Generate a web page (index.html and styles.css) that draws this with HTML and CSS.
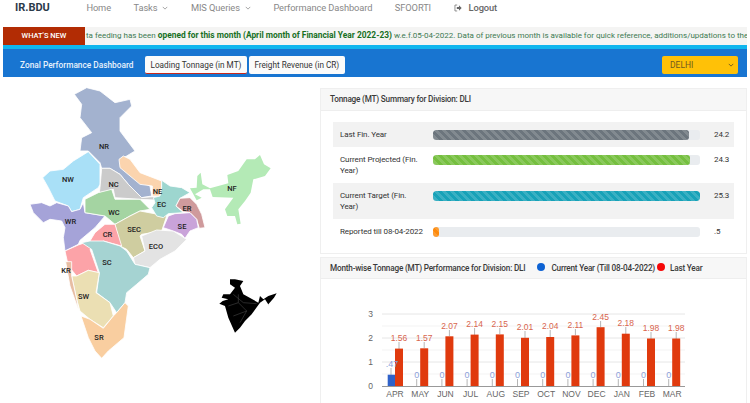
FILE: index.html
```html
<!DOCTYPE html>
<html lang="en">
<head>
<meta charset="utf-8">
<title>IR.BDU</title>
<link rel="stylesheet" href="styles.css">
</head>
<body>
<nav class="nav">
  <span class="brand">IR.BDU</span>
  <a class="nav-item">Home</a>
  <a class="nav-item">Tasks <svg class="chev" viewBox="0 0 8 5"><path d="M1 1l3 3 3-3"/></svg></a>
  <a class="nav-item">MIS Queries <svg class="chev" viewBox="0 0 8 5"><path d="M1 1l3 3 3-3"/></svg></a>
  <a class="nav-item">Performance Dashboard</a>
  <a class="nav-item">SFOORTI</a>
  <a class="nav-item logout"><svg class="logout-icon" viewBox="0 0 10 9"><path class="door" d="M4 .8H1.200v7.400H4"/><path class="arrow" d="M3.500 3.200h2.700V1.200L9.600 4.500 6.200 7.800v-2H3.500z"/></svg>Logout</a>
</nav>
<div class="ticker">
  <div class="ticker-tag">WHAT'S NEW</div>
  <div class="ticker-text">ta feeding has been <b>opened for this month (April month of Financial Year 2022-23)</b> w.e.f.05-04-2022. Data of previous month is available for quick reference, additions/updations to the s</div>
</div>
<header class="bar">
  <div class="bar-title">Zonal Performance Dashboard</div>
  <button class="tab tab-active">Loading Tonnage (in MT)</button>
  <button class="tab">Freight Revenue (in CR)</button>
  <div class="zone">DELHI <svg class="zone-chev" viewBox="0 0 8 5"><path d="M1 1l3 3 3-3"/></svg></div>
</header>
<main class="main">
  <section class="map-col">
    <svg class="map" viewBox="0 76 320 327">
      <g class="zones" transform="translate(20 80) scale(.3333)">
        <path class="z-nr" d="M163 40L200 20 240 30 285 65 330 55 335 75 300 110 300 150 345 210 320 225 300 235 310 260 340 290 390 315 395 345 365 350 325 310 300 280 270 262 245 262 240 245 205 210 180 210 185 170 215 155 180 110 185 70Z"/>
        <path class="z-nw" d="M68 290L90 270 130 265 160 240 205 212 240 250 240 310 235 320 190 350 180 385 155 392 145 375 105 360 85 320Z"/>
        <path class="z-nc" d="M245 262L270 262 300 280 325 310 365 350 420 345 465 350 470 380 450 395 420 358 360 355 285 350 280 325 255 332 238 335 240 320Z"/>
        <path class="z-wr" d="M30 370L65 365 90 375 110 365 145 375 155 392 180 385 190 365 195 395 255 405 225 440 180 478 175 490 135 510 130 470 135 440 125 420 90 415 70 425 40 395Z"/>
      </g>
      <g class="zones" transform="translate(140 80) scale(.3333)">
        <path class="z-ne" d="M-63 235L-50 225 -30 235 -15 255 0 275 65 300 65 320 60 345 37 345 37 315 0 310 -30 285 -60 260Z"/>
        <path class="z-wc" d="M-165 355L-125 335 -85 325 -75 355 0 355 30 385 0 390 -30 405 -75 430 -105 405 -165 395Z"/>
        <path class="z-sec" d="M-75 430L-30 405 0 390 80 405 65 450 5 460 0 465 15 510 -20 530 -40 505 -60 495Z"/>
        <path class="z-eco" d="M5 465L50 447 100 450 140 475 105 510 60 535 30 560 -15 550 -20 530 15 510Z"/>
        <path class="z-ec" d="M35 380L45 365 40 350 60 345 65 320 65 298 90 315 125 320 150 335 120 352 108 375 130 395 85 398 70 410 50 405Z"/>
        <path class="z-er" d="M108 375L120 352 150 350 170 370 185 400 195 440 178 442 170 415 150 395 130 392Z"/>
        <path class="z-se" d="M70 440L85 405 105 398 150 395 170 415 175 440 150 450 135 472 125 460 100 450Z"/>
        <path class="z-nf" d="M150 322L170 320 172 285 182 275 187 310 210 322 265 307 262 282 295 270 320 235 345 235 360 222 372 250 392 262 375 285 340 295 332 335 315 360 295 385 302 428 292 430 285 405 262 405 255 385 280 350 218 348 210 325 190 325 165 340 185 350 170 358Z"/>
      </g>
      <g class="zones" transform="translate(20 230) scale(.3333)">
        <path class="z-cr" d="M135 60L175 42 210 30 225 5 255 -20 285 -20 305 45 250 30 210 55 235 125 205 118 170 135 145 105Z"/>
        <path class="z-sc" d="M185 35L210 30 250 30 300 45 320 60 345 100 390 110 385 130 350 160 320 185 315 215 290 245 270 215 230 185 238 125 215 55Z"/>
        <path class="z-sw" d="M155 135L170 135 205 118 238 125 228 185 270 215 280 255 250 290 210 265 180 240 170 205Z"/>
        <path class="z-kr" d="M137 92L155 92 155 135 170 205 176 238 150 165Z"/>
        <path class="z-sr" d="M183 255L210 265 250 292 280 255 290 245 315 215 325 225 312 320 265 360 245 382 225 360 205 320Z"/>
      </g>
      <text class="zl" x="104" y="147.500">NR</text>
      <text class="zl" x="68" y="180.500">NW</text>
      <text class="zl" x="113.500" y="186">NC</text>
      <text class="zl" x="114" y="213.500">WC</text>
      <text class="zl" x="70.500" y="222.500">WR</text>
      <text class="zl" x="107.500" y="236">CR</text>
      <text class="zl" x="134" y="231">SEC</text>
      <text class="zl" x="157.500" y="192.500">NE</text>
      <text class="zl" x="161.500" y="206">EC</text>
      <text class="zl" x="187" y="209.500">ER</text>
      <text class="zl" x="182" y="228">SE</text>
      <text class="zl" x="232" y="189.500">NF</text>
      <text class="zl" x="156" y="248">ECO</text>
      <text class="zl" x="107" y="264">SC</text>
      <text class="zl" x="66" y="272">KR</text>
      <text class="zl" x="83.500" y="297.500">SW</text>
      <text class="zl" x="99" y="339">SR</text>
      <g transform="translate(200 260) scale(.3333)">
        <path class="mini" d="M90 55L105 55 130 60 120 75 130 100 175 125 180 105 190 115 205 105 230 97 222 110 205 130 208 135 195 115 180 125 155 160 135 180 120 200 105 215 85 170 75 135 58 128 68 120 85 115 65 110 70 100 90 100 105 80 90 70Z"/>
        <path class="mini-lines" d="M100 100L130 125 170 128M85 135L115 125 140 150 120 185M100 165L140 150M115 100V125"/>
      </g>
    </svg>
  </section>
  <section class="panels">
    <article class="panel summary">
      <h2 class="panel-head">Tonnage (MT) Summary for Division: DLI</h2>
      <div class="rows">
        <div class="row row-alt">
          <div class="row-label">Last Fin. Year</div>
          <div class="track"><div class="fill fill-grey" style="width:95.8%"></div></div>
          <div class="row-val">24.2</div>
        </div>
        <div class="row">
          <div class="row-label">Current Projected (Fin. Year)</div>
          <div class="track"><div class="fill fill-green" style="width:96.3%"></div></div>
          <div class="row-val">24.3</div>
        </div>
        <div class="row row-alt">
          <div class="row-label">Current Target (Fin.<br>Year)</div>
          <div class="track"><div class="fill fill-teal" style="width:100%"></div></div>
          <div class="row-val">25.3</div>
        </div>
        <div class="row">
          <div class="row-label">Reported till 08-04-2022</div>
          <div class="track"><div class="fill fill-orange" style="width:2.1%"></div></div>
          <div class="row-val">.5</div>
        </div>
      </div>
    </article>
    <article class="panel monthly">
      <h2 class="panel-head monthly-head">
        <span>Month-wise Tonnage (MT) Performance for Division: DLI</span>
        <i class="dot dot-blue"></i><span>Current Year (Till 08-04-2022)</span>
        <i class="dot dot-red"></i><span>Last Year</span>
      </h2>
      <svg class="chart" viewBox="320 279 427 124">
        <path class="minor" d="M382 326H685M382 350H685M382 374H685"/>
        <path class="grid" d="M382 314H685M382 338H685M382 362H685"/>
        <text class="ya" x="373" y="317">3</text>
        <text class="ya" x="373" y="341">2</text>
        <text class="ya" x="373" y="365">1</text>
        <text class="ya" x="373" y="389">0</text>
        <path class="lead" d="M391 368V375M399 342V349M416.700 379V386M424.200 342V348M441.900 379V386M449.400 330V336M467.100 379V386M474.600 328V335M492.300 379V386M499.800 328V334M517.500 379V386M525 331V338M542.700 379V386M550.200 330V337M567.900 379V386M575.400 329V335M593.100 379V386M600.600 321V327M618.300 379V386M625.800 327V334M643.500 379V386M651 332V339M668.700 379V386M676.200 332V339"/>
        <rect class="b-blue" x="387.700" y="374.700" width="7.300" height="11.300"/>
        <rect class="b-red" x="395" y="348.600" width="8" height="37.400"/>
        <rect class="b-red" x="420.200" y="348.300" width="8" height="37.700"/>
        <rect class="b-red" x="445.400" y="336.300" width="8" height="49.700"/>
        <rect class="b-red" x="470.600" y="334.600" width="8" height="51.400"/>
        <rect class="b-red" x="495.800" y="334.400" width="8" height="51.600"/>
        <rect class="b-red" x="521" y="337.800" width="8" height="48.200"/>
        <rect class="b-red" x="546.200" y="337" width="8" height="49"/>
        <rect class="b-red" x="571.400" y="335.400" width="8" height="50.600"/>
        <rect class="b-red" x="596.600" y="327.200" width="8" height="58.800"/>
        <rect class="b-red" x="621.800" y="333.700" width="8" height="52.300"/>
        <rect class="b-red" x="647" y="338.500" width="8" height="47.500"/>
        <rect class="b-red" x="672.200" y="338.500" width="8" height="47.500"/>
        <path class="axis" d="M382 386.500H685"/>
        <text class="l-blue" x="392" y="367">.47</text>
        <text class="l-blue" x="416.700" y="378">0</text>
        <text class="l-blue" x="441.900" y="378">0</text>
        <text class="l-blue" x="467.100" y="378">0</text>
        <text class="l-blue" x="492.300" y="378">0</text>
        <text class="l-blue" x="517.500" y="378">0</text>
        <text class="l-blue" x="542.700" y="378">0</text>
        <text class="l-blue" x="567.900" y="378">0</text>
        <text class="l-blue" x="593.100" y="378">0</text>
        <text class="l-blue" x="618.300" y="378">0</text>
        <text class="l-blue" x="643.500" y="378">0</text>
        <text class="l-blue" x="668.700" y="378">0</text>
        <text class="l-red" x="399" y="341">1.56</text>
        <text class="l-red" x="424.200" y="341">1.57</text>
        <text class="l-red" x="449.400" y="329">2.07</text>
        <text class="l-red" x="474.600" y="327">2.14</text>
        <text class="l-red" x="499.800" y="327">2.15</text>
        <text class="l-red" x="525" y="330">2.01</text>
        <text class="l-red" x="550.200" y="329">2.04</text>
        <text class="l-red" x="575.400" y="328">2.11</text>
        <text class="l-red" x="600.600" y="320">2.45</text>
        <text class="l-red" x="625.800" y="326">2.18</text>
        <text class="l-red" x="651" y="331">1.98</text>
        <text class="l-red" x="676.200" y="331">1.98</text>
        <text class="mo" x="395" y="397">APR</text>
        <text class="mo" x="420.200" y="397">MAY</text>
        <text class="mo" x="445.400" y="397">JUN</text>
        <text class="mo" x="470.600" y="397">JUL</text>
        <text class="mo" x="495.800" y="397">AUG</text>
        <text class="mo" x="521" y="397">SEP</text>
        <text class="mo" x="546.200" y="397">OCT</text>
        <text class="mo" x="571.400" y="397">NOV</text>
        <text class="mo" x="596.600" y="397">DEC</text>
        <text class="mo" x="621.800" y="397">JAN</text>
        <text class="mo" x="647" y="397">FEB</text>
        <text class="mo" x="672.200" y="397">MAR</text>
      </svg>
    </article>
  </section>
</main>
</body>
</html>
```
FILE: styles.css
```css
* { box-sizing: border-box; }
html, body { margin: 0; height: 403px; overflow: hidden; background: #fff; }
body { font-family: Roboto, "Open Sans", sans-serif; color: #333; padding-right: 3px; }

.nav { display: flex; align-items: flex-start; height: 27px; padding-left: 15px; gap: 22.500px; font-size: 9.300px; letter-spacing: -.1px; line-height: 15px; color: #888; }
.brand { font-weight: 700; font-size: 11px; letter-spacing: 0; color: #2b3a4a; margin-right: 14px; }
.nav-item { display: flex; align-items: center; gap: 5px; white-space: nowrap; }
.chev { width: 6px; height: 4px; fill: none; stroke: #888; stroke-width: 1; }
.logout { color: #666; font-weight: 500; gap: 7px; }
.logout-icon { width: 8px; height: 8px; }
.door { fill: none; stroke: #777; stroke-width: 1; }
.arrow { fill: #666; }

.ticker { display: flex; height: 18px; margin-left: 3px; background: #f4f4f3; overflow: hidden; }
.ticker-tag { flex: 0 0 82px; background: #b22c04; color: #fff; font-size: 7.500px; font-weight: 500; line-height: 18px; text-align: center; }
.ticker-text { padding-left: 1px; font-size: 8px; line-height: 17px; white-space: nowrap; color: #3d7a52; }
.ticker-text b { color: #17701f; font-size: 8.400px; font-weight: 700; }

.bar { display: flex; align-items: center; height: 32px; margin-left: 3px; padding: 4px 9px 0 17px; border-top: 4px solid #10b6ee; background: #1875d1; }
.bar-title { width: 125px; color: #e8f2fc; font-size: 8.300px; font-weight: 500; white-space: nowrap; }
.tab { height: 18px; margin-right: 2px; padding: 0 5.500px; border: 0; border-radius: 2px; background: #fbfbfb; color: #333; font: 400 8.200px Roboto, "Open Sans", sans-serif; white-space: nowrap; }
.tab-active { border-bottom: 1px solid #c8281a; }
.zone { display: flex; align-items: center; justify-content: space-between; width: 76px; height: 18px; margin-left: auto; padding: 0 4px 0 8px; border-radius: 2px; background: #ffc107; color: #6f5a20; font-size: 8.500px; }
.zone-chev { width: 6px; height: 4px; fill: none; stroke: #6f5a20; stroke-width: 1.200; }

.main { display: flex; }
.map-col { flex: 0 0 320px; }
.map { display: block; width: 320px; height: 327px; }
.zones path { stroke: #fff; stroke-width: 2.500; stroke-linejoin: round; }
.z-nr { fill: #a3b2cf; }
.z-nw { fill: #a9e0f7; }
.z-nc { fill: #cbcbcb; }
.z-wr { fill: #a5a3d8; }
.z-ne { fill: #fbd4ae; }
.z-wc { fill: #a4d4a2; }
.z-sec { fill: #cfcda0; }
.z-eco { fill: #e3e3e3; }
.z-ec { fill: #9dd6cf; }
.z-er { fill: #cf9a9c; }
.z-se { fill: #c9a3d9; }
.zones .z-nf { fill: #b4eab6; stroke: none; }
.z-cr { fill: #fca3a8; }
.z-sc { fill: #a5d3d2; }
.z-sw { fill: #ebdfb3; }
.z-kr { fill: #e7bda3; }
.z-sr { fill: #f9cea0; }
.zl { fill: #222; font-family: Roboto, sans-serif; font-size: 7.500px; font-weight: 500; text-anchor: middle; }
.mini { fill: #000; }
.mini-lines { fill: none; stroke: #555; stroke-width: 1.500; }

.panels { flex: 1; min-width: 0; display: flex; flex-direction: column; gap: 3px; padding-top: 11px; }
.panel { border: 1px solid #efefef; background: #fff; }
.panel-head { height: 22px; margin: 0; padding: 0 9px; border-bottom: 1px solid #eee; background: #f7f7f7; color: #3a3a3a; font-size: 8.200px; letter-spacing: -.2px; font-weight: 500; line-height: 21px; white-space: nowrap; }
.summary { height: 166px; }
.rows { padding: 11px 12px 0; }
.row { display: flex; align-items: flex-start; padding: 7px 0; font-size: 8px; letter-spacing: -.1px; line-height: 11px; color: #333; }
.row-alt { background: #f2f2f2; }
.row-label { flex: 0 0 100px; padding: 0 7px; }
.track { flex: 0 0 267px; height: 10px; margin-top: 1px; border-radius: 3px; background: #e9ecef; overflow: hidden; }
.fill { height: 100%; border-radius: 3px; background-image: linear-gradient(45deg, rgba(255,255,255,.15) 25%, transparent 25%, transparent 50%, rgba(255,255,255,.15) 50%, rgba(255,255,255,.15) 75%, transparent 75%); background-size: 8px 8px; }
.fill-grey { background-color: #6c757d; }
.fill-green { background-color: #75bf3f; }
.fill-teal { background-color: #17a2b8; }
.fill-orange { background-color: #fd8a0c; }
.row-val { padding-left: 14px; }

.monthly { flex: 1; }
.monthly-head { display: flex; align-items: center; height: 21px; line-height: 20px; }
.dot { flex: none; width: 8px; height: 8px; border-radius: 50%; }
.dot-blue { margin: -3px 6px 0 12px; background: #0d62d3; }
.dot-red { margin: -3px 5px 0 2px; background: #f60808; }
.chart { display: block; width: 427px; height: 124px; margin-left: -1px; font-family: "Liberation Sans", Arial, sans-serif; font-size: 8.500px; }
.grid { stroke: #e6e6e6; stroke-width: 1; fill: none; }
.minor { stroke: #f3f3f3; stroke-width: 1; fill: none; }
.axis { stroke: #999; stroke-width: 1; fill: none; }
.lead { stroke: #b5b5b5; stroke-width: 1; fill: none; }
.b-blue { fill: #2f62c9; }
.b-red { fill: #e03a0e; }
.ya { fill: #666; font-size: 8.500px; text-anchor: end; }
.l-blue { fill: #8d9fd9; font-size: 9px; text-anchor: middle; }
.l-red { fill: #d8654e; text-anchor: middle; }
.mo { fill: #666; text-anchor: middle; }
```
